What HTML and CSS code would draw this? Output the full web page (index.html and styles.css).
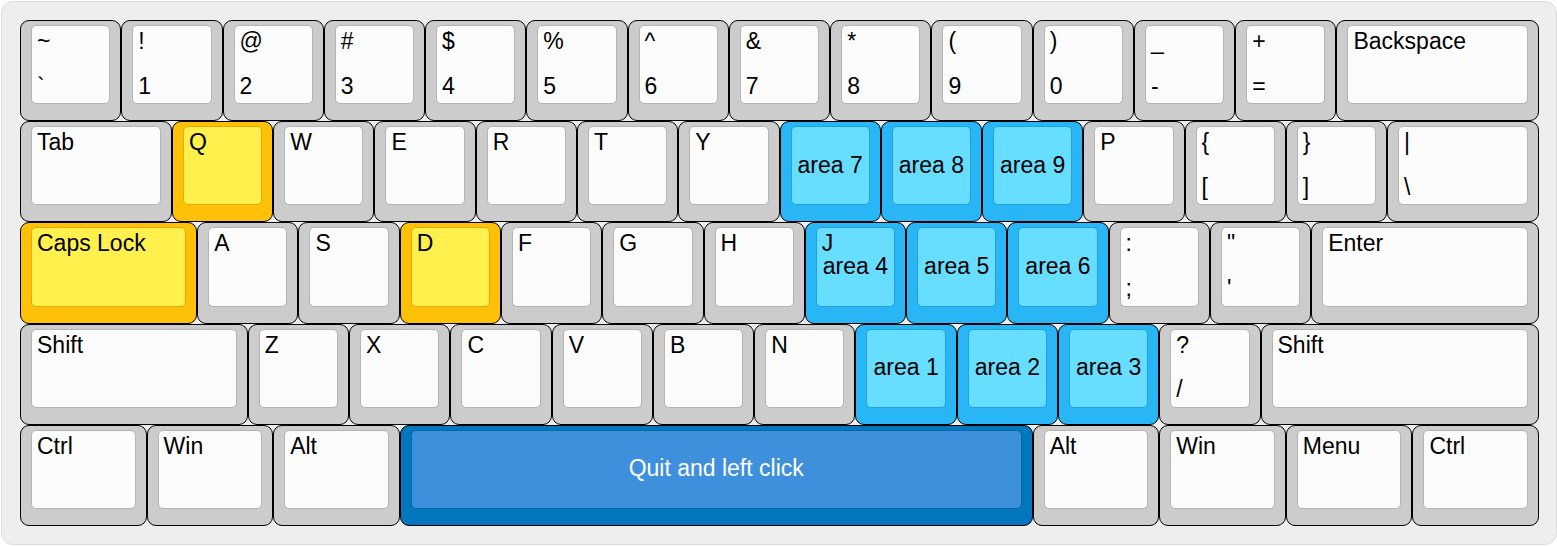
FILE: index.html
```html
<!DOCTYPE html>
<html lang="en">
<head>
<meta charset="utf-8">
<title>Keyboard layout</title>
<link rel="stylesheet" href="styles.css">
</head>
<body>
<main class="board">
<button class="key"><span class="cap"><span class="top">~</span><span class="low">`</span></span></button>
<button class="key"><span class="cap"><span class="top">!</span><span class="low">1</span></span></button>
<button class="key"><span class="cap"><span class="top">@</span><span class="low">2</span></span></button>
<button class="key"><span class="cap"><span class="top">#</span><span class="low">3</span></span></button>
<button class="key"><span class="cap"><span class="top">$</span><span class="low">4</span></span></button>
<button class="key"><span class="cap"><span class="top">%</span><span class="low">5</span></span></button>
<button class="key"><span class="cap"><span class="top">^</span><span class="low">6</span></span></button>
<button class="key"><span class="cap"><span class="top">&amp;</span><span class="low">7</span></span></button>
<button class="key"><span class="cap"><span class="top">*</span><span class="low">8</span></span></button>
<button class="key"><span class="cap"><span class="top">(</span><span class="low">9</span></span></button>
<button class="key"><span class="cap"><span class="top">)</span><span class="low">0</span></span></button>
<button class="key"><span class="cap"><span class="top">_</span><span class="low">-</span></span></button>
<button class="key"><span class="cap"><span class="top">+</span><span class="low">=</span></span></button>
<button class="key w8"><span class="cap"><span class="top">Backspace</span></span></button>

<button class="key w6"><span class="cap"><span class="top">Tab</span></span></button>
<button class="key yellow"><span class="cap"><span class="top">Q</span></span></button>
<button class="key"><span class="cap"><span class="top">W</span></span></button>
<button class="key"><span class="cap"><span class="top">E</span></span></button>
<button class="key"><span class="cap"><span class="top">R</span></span></button>
<button class="key"><span class="cap"><span class="top">T</span></span></button>
<button class="key"><span class="cap"><span class="top">Y</span></span></button>
<button class="key sky"><span class="cap"><span class="mid">area 7</span></span></button>
<button class="key sky"><span class="cap"><span class="mid">area 8</span></span></button>
<button class="key sky"><span class="cap"><span class="mid">area 9</span></span></button>
<button class="key"><span class="cap"><span class="top">P</span></span></button>
<button class="key"><span class="cap"><span class="top">{</span><span class="low">[</span></span></button>
<button class="key"><span class="cap"><span class="top">}</span><span class="low">]</span></span></button>
<button class="key w6"><span class="cap"><span class="top">|</span><span class="low">\</span></span></button>

<button class="key w7 yellow"><span class="cap"><span class="top">Caps Lock</span></span></button>
<button class="key"><span class="cap"><span class="top">A</span></span></button>
<button class="key"><span class="cap"><span class="top">S</span></span></button>
<button class="key yellow"><span class="cap"><span class="top">D</span></span></button>
<button class="key"><span class="cap"><span class="top">F</span></span></button>
<button class="key"><span class="cap"><span class="top">G</span></span></button>
<button class="key"><span class="cap"><span class="top">H</span></span></button>
<button class="key sky"><span class="cap"><span class="top">J</span><span class="mid">area 4</span></span></button>
<button class="key sky"><span class="cap"><span class="mid">area 5</span></span></button>
<button class="key sky"><span class="cap"><span class="mid">area 6</span></span></button>
<button class="key"><span class="cap"><span class="top">:</span><span class="low">;</span></span></button>
<button class="key"><span class="cap"><span class="top">"</span><span class="low">'</span></span></button>
<button class="key w9"><span class="cap"><span class="top">Enter</span></span></button>

<button class="key w9"><span class="cap"><span class="top">Shift</span></span></button>
<button class="key"><span class="cap"><span class="top">Z</span></span></button>
<button class="key"><span class="cap"><span class="top">X</span></span></button>
<button class="key"><span class="cap"><span class="top">C</span></span></button>
<button class="key"><span class="cap"><span class="top">V</span></span></button>
<button class="key"><span class="cap"><span class="top">B</span></span></button>
<button class="key"><span class="cap"><span class="top">N</span></span></button>
<button class="key sky"><span class="cap"><span class="mid">area 1</span></span></button>
<button class="key sky"><span class="cap"><span class="mid">area 2</span></span></button>
<button class="key sky"><span class="cap"><span class="mid">area 3</span></span></button>
<button class="key"><span class="cap"><span class="top">?</span><span class="low">/</span></span></button>
<button class="key w11"><span class="cap"><span class="top">Shift</span></span></button>

<button class="key w5"><span class="cap"><span class="top">Ctrl</span></span></button>
<button class="key w5"><span class="cap"><span class="top">Win</span></span></button>
<button class="key w5"><span class="cap"><span class="top">Alt</span></span></button>
<button class="key w25 blue"><span class="cap"><span class="mid">Quit and left click</span></span></button>
<button class="key w5"><span class="cap"><span class="top">Alt</span></span></button>
<button class="key w5"><span class="cap"><span class="top">Win</span></span></button>
<button class="key w5"><span class="cap"><span class="top">Menu</span></span></button>
<button class="key w5"><span class="cap"><span class="top">Ctrl</span></span></button>
</main>
</body>
</html>
```
FILE: styles.css
```css
* {
  box-sizing: border-box;
}

body {
  display: flex;
  min-height: 100vh;
  margin: 0;
  padding: 1px 0 1px 1px;
  background: #fff;
  font-family: "Liberation Sans", Arial, sans-serif;
}

/* One key unit is four columns wide, so quarter-unit keys fit the grid. */
.board {
  flex: 1;
  display: grid;
  grid-template-columns: repeat(60, minmax(0, 1fr));
  grid-auto-rows: 1fr;
  padding: 18px 17px 18px 18px;
  border: 1px solid #ddd;
  border-radius: 12px;
  background: #eee;
}

.key {
  grid-column: span 4;
  display: flex;
  margin: 0;
  padding: 4px 10px 16px;
  border: 1px solid #000;
  border-radius: 9px;
  background: #ccc;
  color: #000;
  font: inherit;
  font-size: 23px;
  line-height: 22px;
  text-align: left;
}

.w5 { grid-column: span 5; }
.w6 { grid-column: span 6; }
.w7 { grid-column: span 7; }
.w8 { grid-column: span 8; }
.w9 { grid-column: span 9; }
.w11 { grid-column: span 11; }
.w25 { grid-column: span 25; }

.cap {
  flex: 1;
  align-self: stretch;
  display: grid;
  grid-template-rows: repeat(3, minmax(0, 1fr));
  min-width: 0;
  padding: 4px 5px 6px;
  border: 1px solid #b4b4b4;
  border-radius: 5px;
  background: #fcfcfc;
  white-space: nowrap;
}

.top { grid-row: 1; }
.mid { grid-row: 2; justify-self: center; }
.low { grid-row: 3; }

.key.yellow { background: #ffc107; }
.yellow .cap { background: #fff04d; border-color: #e2ab06; }

.key.sky { background: #29b6f6; }
.sky .cap { background: #67deff; border-color: #24a1da; }

.key.blue { background: #0277bd; color: #fff; }
.blue .cap { background: #3e90dc; border-color: #0269a7; }
```
